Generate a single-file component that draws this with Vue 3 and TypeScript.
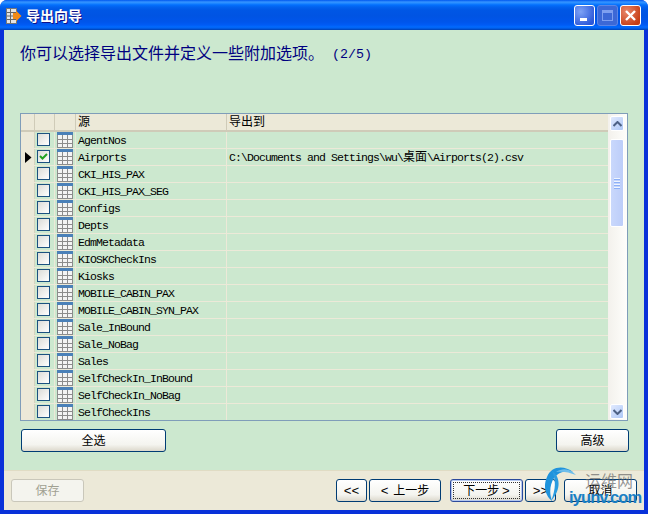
<script setup lang="ts">
const names: string[] = ['AgentNos','Airports','CKI_HIS_PAX','CKI_HIS_PAX_SEG','Configs','Depts','EdmMetadata','KIOSKCheckIns','Kiosks','MOBILE_CABIN_PAX','MOBILE_CABIN_SYN_PAX','Sale_InBound','Sale_NoBag','Sales','SelfCheckIn_InBound','SelfCheckIn_NoBag','SelfCheckIns']
</script>

<template>
  <div class="window">
    <div class="titlebar">
      <svg class="appicon" width="16" height="16" viewBox="0 0 16 16">
        <rect x="0.5" y="0.5" width="10" height="15" fill="#e4e4e4" stroke="#777" />
        <path d="M1 4.500h9M1 8h9M1 11.500h9M4.500 1v14" stroke="#666" fill="none" />
        <path d="M7 5h3V2.500L15.500 8 10 13.500V11H7z" fill="#f28a16" />
      </svg>
      <span class="titletext">导出向导</span>
      <div class="winbtns">
        <div class="wb wb-min"><i></i></div>
        <div class="wb wb-max"><i></i></div>
        <div class="wb wb-close">
          <svg width="13" height="13" viewBox="0 0 13 13"><path d="M2 2l9 9M11 2l-9 9" stroke="#fff" stroke-width="2.400" /></svg>
        </div>
      </div>
    </div>
    <div class="body">
      <div class="content">
        <div class="heading">你可以选择导出文件并定义一些附加选项。<span class="hnum"> (2/5)</span></div>
        <div class="tablebox">
          <div class="table">
            <div class="row head">
              <div class="c c-ind"></div>
              <div class="c c-chk"></div>
              <div class="c c-ico"></div>
              <div class="c c-src cjk">源</div>
              <div class="c c-out cjk">导出到</div>
            </div>
            <div v-for="n in names" :key="n" class="row">
              <div class="c c-ind">
                <svg v-if="n === 'Airports'" width="7" height="11" viewBox="0 0 7 11"><path d="M0 0l6.500 5.500L0 11z" fill="#000" /></svg>
              </div>
              <div class="c c-chk">
                <div class="check">
                  <svg v-if="n === 'Airports'" width="11" height="11" viewBox="0 0 11 11"><path d="M2 5l2.500 2.500L9 3" stroke="#21a121" stroke-width="2" fill="none" /></svg>
                </div>
              </div>
              <div class="c c-ico">
                <svg width="16" height="16" viewBox="0 0 16 16">
                  <rect width="16" height="16" fill="#f4f4f4" />
                  <rect width="16" height="3" fill="#4a80b8" />
                  <path d="M0.500 3v13M5.500 3v13M10.500 3v13M15.500 3v13M0 7.500h16M0 11.500h16M0 15.500h16" stroke="#8c8c8c" fill="none" />
                </svg>
              </div>
              <div class="c c-src mono">{{ n }}</div>
              <div class="c c-out mono">
                <span v-if="n === 'Airports'">C:\Documents and Settings\wu\<span class="cjk">桌面</span>\Airports(2).csv</span>
              </div>
            </div>
          </div>
          <div class="scroll">
            <div class="sbtn">
              <svg width="9" height="6" viewBox="0 0 9 6"><path d="M0.500 5L4.500 1l4 4" stroke="#4d6185" stroke-width="2" fill="none" /></svg>
            </div>
            <div class="thumb">
              <div class="grip"><i></i><i></i><i></i><i></i></div>
            </div>
            <div class="sspace"></div>
            <div class="sbtn">
              <svg width="9" height="6" viewBox="0 0 9 6"><path d="M0.500 1L4.500 5l4-4" stroke="#4d6185" stroke-width="2" fill="none" /></svg>
            </div>
          </div>
        </div>
        <div class="actions">
          <button class="btn wide">全选</button>
          <button class="btn">高级</button>
        </div>
      </div>
      <div class="footer">
        <button class="btn disabled">保存</button>
        <div class="nav">
          <button class="btn narrow"><span class="arr">&lt;&lt;</span></button>
          <button class="btn prev"><span class="arr gap">&lt;</span> 上一步</button>
          <button class="btn next"><span class="focus">下一步 <span class="arr">&gt;</span></span></button>
          <button class="btn narrow"><span class="arr">&gt;&gt;</span></button>
          <button class="btn cancel">取消</button>
        </div>
      </div>
    </div>
    <div class="watermark">
      <svg width="40" height="44" viewBox="0 0 40 44">
        <path d="M29 8C20 1 7 2 3 13C-1 22 1 31 8 37C5 29 6 20 10 14C14 9 21 6 29 8z" fill="#1f93dc" />
        <path d="M8 7C16 12 18 25 7 37C12 25 12 16 8 7z" fill="#2a9ce0" />
        <path d="M12 8C19 3 27 5 32 11C25 8 18 7 12 8z" fill="#6dbdea" />
      </svg>
      <span class="wm-cn">运维网</span>
      <span class="wm-en">iyunv.com</span>
    </div>
  </div>
</template>

<style>
html, body { margin: 0; padding: 0; background: #fff; }
</style>

<style scoped>
.window {
  position: relative;
  width: 648px;
  height: 514px;
  overflow: hidden;
  display: flex;
  flex-direction: column;
  border-radius: 7px 7px 0 0;
  background: #0831d9;
  font-family: "Noto Sans CJK SC", sans-serif;
  font-size: 12px;
  color: #000;
  box-sizing: border-box;
}
.titlebar {
  height: 30px;
  flex: none;
  display: flex;
  align-items: center;
  box-sizing: border-box;
  padding: 0 7px 0 6px;
  background: linear-gradient(to bottom, #0058ee 0, #3593ff 2px, #288eff 3px, #127dff 4px, #036ffc 5px, #0262ee 7px, #0057e5 10px, #0054e3 16px, #0055eb 22px, #005bf5 25px, #026afe 27px, #0062ef 28px, #0052d6 29px, #0040ab 30px);
}
.appicon { flex: none; margin-top: 1px; }
.titletext {
  margin-left: 4px;
  color: #fff;
  font-weight: 700;
  font-size: 14px;
  text-shadow: 1px 1px 0 #0f1089;
}
.winbtns { margin-left: auto; display: flex; gap: 2px; }
.wb {
  width: 21px;
  height: 21px;
  box-sizing: border-box;
  border: 1px solid #fff;
  border-radius: 3px;
  display: flex;
  align-items: center;
  justify-content: center;
}
.wb-min { background: radial-gradient(circle at 30% 30%, #7ea2f5, #2c58d9 80%); align-items: flex-end; padding-bottom: 4px; justify-content: flex-start; padding-left: 5px; }
.wb-min i { display: block; width: 7px; height: 3px; background: #fff; }
.wb-max { background: #3c68d6; border-color: #5c86e6; }
.wb-max i { display: block; width: 11px; height: 11px; box-sizing: border-box; border: 1px solid #7e9ff0; border-top-width: 3px; }
.wb-close { background: radial-gradient(circle at 30% 30%, #e8866a, #c63d14 80%); }
.body {
  flex: 1;
  min-height: 0;
  margin: 0 4px 4px;
  display: flex;
  flex-direction: column;
}
.content {
  flex: 1;
  min-height: 0;
  background: #cce8cf;
  padding: 13px 15px 0 16px;
  display: flex;
  flex-direction: column;
}
.heading {
  height: 18px;
  line-height: 18px;
  color: #000080;
  font-size: 16px;
  white-space: pre;
}
.hnum { font-family: "Liberation Mono", monospace; font-size: 13.330px; vertical-align: 1px; }
.tablebox {
  margin-top: 52px;
  height: 308px;
  box-sizing: border-box;
  border: 1px solid #7f9db9;
  display: flex;
  margin-right: 1px;
  overflow: hidden;
}
.table { flex: 1; min-width: 0; }
.row {
  display: flex;
  height: 17px;
  box-sizing: border-box;
  border-bottom: 1px solid #ece9d8;
}
.row.head { height: 18px; background: #ece9d8; border-bottom: 2px solid #cfcbb8; }
.c {
  box-sizing: border-box;
  border-right: 1px solid #ece9d8;
  display: flex;
  align-items: center;
  flex: none;
  white-space: pre;
}
.row.head .c { border-right-color: #cfcbb8; padding-bottom: 2px; }
.c-ind { width: 14px; background: #ece9d8; border-right-color: #d6d2bf; padding-left: 4px; }
.c-chk { width: 20px; padding-left: 2px; padding-bottom: 1px; }
.c-ico { width: 21px; justify-content: center; }
.c-src { width: 151px; padding-left: 2px; }
.c-out { flex: 1; padding-left: 2px; border-right: none; }
.mono {
  font-family: "Liberation Mono", monospace;
  font-size: 11.500px;
  letter-spacing: -0.900px;
}
.c-src.mono { padding-top: 1px; }
.cjk { font-family: "Noto Sans CJK SC", sans-serif; font-size: 12px; letter-spacing: 0; line-height: 1; }
.check {
  width: 13px;
  height: 13px;
  box-sizing: border-box;
  border: 1px solid #1c5180;
  background: linear-gradient(135deg, #dcdcd7, #fff);
  display: flex;
  align-items: center;
  justify-content: center;
}
.scroll {
  flex: none;
  width: 19px;
  box-sizing: border-box;
  padding: 2px 3px 1px 2px;
  background: linear-gradient(to right, #f3f1ec, #fefefb);
  display: flex;
  flex-direction: column;
}
.sbtn {
  height: 15px;
  flex: none;
  box-sizing: border-box;
  border: 1px solid #fff;
  border-radius: 2px;
  background: linear-gradient(135deg, #e1eafe, #aec8f7);
  display: flex;
  align-items: center;
  justify-content: center;
}
.thumb {
  margin-top: 8px;
  height: 88px;
  flex: none;
  box-sizing: border-box;
  border: 1px solid #fff;
  border-radius: 2px;
  background: linear-gradient(to right, #c9d8fc, #bccdf9);
  display: flex;
  align-items: center;
  justify-content: center;
}
.grip { width: 6px; display: flex; flex-direction: column; gap: 1px; }
.grip i { display: block; height: 1px; background: #eef4fe; border-bottom: 1px solid #8cb0f8; }
.sspace { flex: 1; }
.actions {
  display: flex;
  justify-content: space-between;
  margin-top: 8px;
  padding-left: 1px;
}
.btn {
  width: 73px;
  height: 23px;
  box-sizing: border-box;
  padding: 0 0 2px;
  border: 1px solid #003c74;
  border-radius: 3px;
  background: linear-gradient(to bottom, #ffffff, #f4f4ef 70%, #dcd8cc);
  font-family: "Noto Sans CJK SC", sans-serif;
  font-size: 12px;
  color: #000;
  white-space: pre;
  flex: none;
}
.arr { font-family: "Liberation Mono", monospace; font-size: 13px; font-weight: 400; }
.arr.gap { margin-right: 2px; }
.btn.wide { width: 145px; }
.footer {
  height: 40px;
  flex: none;
  box-sizing: border-box;
  background: #ece9d8;
  border-top: 1px solid #e0dcc4;
  padding: 8px 7px 0;
  display: flex;
  justify-content: space-between;
}
.btn.disabled {
  border-color: #c9c7ba;
  background: #f4f4ee;
  color: #a1a192;
}
.nav { display: flex; }
.btn.narrow { width: 31px; }
.btn.prev { width: 72px; margin-left: 2px; margin-right: 9px; }
.btn.next {
  padding: 0;
  border-color: #2c4a9c;
  box-shadow: inset 0 0 0 1px #b5c8f0;
}
.btn.next + .btn { margin-left: 2px; }
.btn.cancel { margin-left: 8px; }
.focus {
  display: block;
  margin: 2px;
  height: 17px;
  line-height: 13px;
  box-sizing: border-box;
  border: 1px dotted #333;
}
.watermark {
  position: absolute;
  left: 544px;
  top: 464px;
  width: 104px;
  height: 50px;
  pointer-events: none;
}
.watermark svg { position: absolute; left: 0; top: 0; }
.wm-cn {
  position: absolute;
  left: 41px;
  top: 7px;
  font-size: 16px;
  line-height: 18px;
  color: #666666b0;
}
.wm-en {
  position: absolute;
  left: 25px;
  top: 23px;
  font-family: "Liberation Sans", sans-serif;
  font-size: 16.500px;
  line-height: 20px;
  letter-spacing: -0.900px;
  font-weight: 700;
  color: #1a7fc4;
}
</style>
